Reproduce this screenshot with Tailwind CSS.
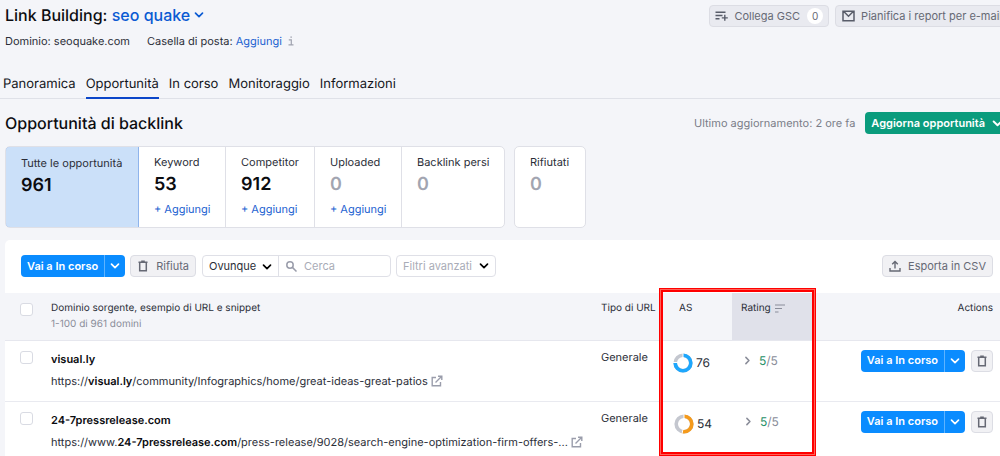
<!DOCTYPE html>
<html lang="it">
<head>
<meta charset="utf-8">
<meta name="viewport" content="width=device-width, initial-scale=1">
<title>Link Building: seo quake</title>
<script src="https://cdn.jsdelivr.net/npm/@tailwindcss/browser@4"></script>
</head>
<body class="min-h-screen overflow-hidden bg-[#f4f5f9] font-['Inter','Liberation_Sans',sans-serif] text-[11px] text-[#2b2e38] [text-rendering:geometricPrecision]">

<svg class="hidden" aria-hidden="true">
  <symbol id="chevron" viewBox="0 0 10 10"><path d="M1.500 3.200 5 6.600l3.500-3.400" fill="none" stroke="currentColor" stroke-width="1.700" stroke-linecap="round" stroke-linejoin="round"/></symbol>
  <symbol id="trash" viewBox="0 0 12 12"><path d="M1.500 2.200h9M4.200 1.200h3.600M2.700 2.500v8.300h6.600V2.500" fill="none" stroke="currentColor" stroke-width="1.500"/></symbol>
  <symbol id="external" viewBox="0 0 12 12"><path d="M5 2.500H1.200v8.300h8.300V7M7 1.200h3.800V5M10.500 1.500 4.500 7.500" fill="none" stroke="currentColor" stroke-width="1.400"/></symbol>
</svg>

<header class="flex justify-between pt-[5px] pl-[5px]">
  <div>
    <h1 class="flex items-center text-base leading-5 font-medium text-[#0b0c10]">Link Building:&nbsp;<button type="button" class="flex items-center gap-1 font-medium text-[#0b5bd3]">seo quake <svg class="size-[10px]"><use href="#chevron"/></svg></button></h1>
    <p class="mt-2 flex items-center leading-4">
      <span>Dominio: seoquake.com</span>
      <span class="ml-[17px]">Casella di posta: <a href="#" class="text-[#1d63d1]">Aggiungi</a></span>
      <svg class="ml-[6px] h-[10px] w-[6px] text-[#a0a3b0]" viewBox="0 0 6 10" fill="none" stroke="currentColor" stroke-width="1.200"><path d="M.8 3.900h2.500v4.700M.5 8.900h5M2.400 1.200h1.500"/></svg>
    </p>
  </div>
  <div class="-mr-[9px] flex shrink-0 gap-[6px] text-[#666974]">
    <button type="button" class="flex h-[22px] items-center rounded-[4px] border border-[#dcdde4] bg-[#e9eaf0] px-[5px]">
      <svg class="mr-[6px] h-3 w-[13px] text-[#585c69]" viewBox="0 0 13 12" fill="none" stroke="currentColor" stroke-width="1.400"><path d="M.5 2.200h10M.5 5.500h7M.5 8.800h4M9.800 4.700v6M6.800 7.900h6"/></svg>
      Collega GSC
      <span class="ml-[7px] flex size-4 items-center justify-center rounded-full bg-white text-[10px]">0</span>
    </button>
    <button type="button" class="flex h-[22px] items-center rounded-[4px] border border-[#dcdde4] bg-[#e9eaf0] px-[6px]">
      <svg class="mr-[6px] h-3 w-[13px] text-[#585c69]" viewBox="0 0 13 12" fill="none" stroke="currentColor" stroke-width="1.500"><path d="M1 1.200h11v9.600H1zM2 1.800l4.500 4.400L11 1.800"/></svg>
      Pianifica i report per e-mail
    </button>
  </div>
</header>

<nav class="mt-[23px] flex gap-[10px] border-b border-[#dfe1e8] pl-[3px] text-[13px] leading-6 text-[#14161c]">
  <a href="#" class="pb-[2px]">Panoramica</a>
  <a href="#" aria-current="page" class="-mb-px border-b-2 border-[#0b46c9] pb-px">Opportunità</a>
  <a href="#">In corso</a>
  <a href="#">Monitoraggio</a>
  <a href="#">Informazioni</a>
</nav>

<main class="pl-[5px]">
  <div class="mt-[13px] flex items-center justify-between">
    <h2 class="text-base leading-[22px] font-medium text-[#0b0c10]">Opportunità di backlink</h2>
    <div class="-mr-[9px] flex items-center gap-[10px]">
      <span class="text-[#7a7d88]">Ultimo aggiornamento: 2 ore fa</span>
      <button type="button" class="flex h-[22px] items-center rounded-[4px] bg-[#0a9c7d] px-[6px] font-semibold text-white">Aggiorna opportunità <svg class="ml-[7px] size-[11px]"><use href="#chevron"/></svg></button>
    </div>
  </div>

  <section class="mt-3 flex gap-[9px] text-[11px]">
    <div class="flex h-[82px] overflow-hidden rounded-[5px] border border-[#dfe0e7] bg-white">
      <div class="-m-px w-[134px] rounded-l-[5px] border border-[#8fb4ec] bg-[#cbe0f9] px-[15px] pt-2">
        <div class="leading-4 whitespace-nowrap">Tutte le opportunità</div><div class="mt-[3px] text-lg leading-6 font-semibold text-[#0b0c10]">961</div>
      </div>
      <div class="ml-px w-[87px] border-r border-[#dfe0e7] pt-[7px] pl-[15px]">
        <div class="leading-4">Keyword</div><div class="mt-[3px] text-lg leading-6 font-semibold text-[#0b0c10]">53</div><a href="#" class="mt-1 block leading-4 text-[#1d63d1]">+ Aggiungi</a>
      </div>
      <div class="w-[89px] border-r border-[#dfe0e7] pt-[7px] pl-[15px]">
        <div class="leading-4">Competitor</div><div class="mt-[3px] text-lg leading-6 font-semibold text-[#0b0c10]">912</div><a href="#" class="mt-1 block leading-4 text-[#1d63d1]">+ Aggiungi</a>
      </div>
      <div class="w-[87px] border-r border-[#dfe0e7] pt-[7px] pl-[15px]">
        <div class="leading-4">Uploaded</div><div class="mt-[3px] text-lg leading-6 font-semibold text-[#a2a5b1]">0</div><a href="#" class="mt-1 block leading-4 text-[#1d63d1]">+ Aggiungi</a>
      </div>
      <div class="w-[102px] pt-[7px] pl-[15px]">
        <div class="leading-4">Backlink persi</div><div class="mt-[3px] text-lg leading-6 font-semibold text-[#a2a5b1]">0</div>
      </div>
    </div>
    <div class="h-[82px] w-[72px] rounded-[5px] border border-[#dfe0e7] bg-white pt-[7px] pl-[15px]">
      <div class="leading-4">Rifiutati</div><div class="mt-[3px] text-lg leading-6 font-semibold text-[#a2a5b1]">0</div>
    </div>
  </section>

  <section class="relative mt-3 rounded-tl-[5px] bg-white pt-[15px]">
    <div class="flex pr-[7px] pb-4 pl-4">
      <div class="flex h-[22px] rounded-[4px] bg-[#0a8cff] font-semibold text-white">
        <button type="button" class="px-[6px]">Vai a In corso</button>
        <button type="button" aria-label="Altre azioni" class="flex w-[21px] items-center justify-center border-l border-[#5eb3ff]"><svg class="size-[10px]"><use href="#chevron"/></svg></button>
      </div>
      <button type="button" class="ml-[5px] flex h-[22px] items-center gap-[7px] rounded-[4px] border border-[#dcdde4] bg-[#f1f1f4] px-[6px] text-[#666974]"><svg class="size-3"><use href="#trash"/></svg>Rifiuta</button>
      <div class="ml-[6px] flex h-[22px] w-[189px] rounded-[4px] border border-[#dfe0e7]">
        <div class="relative w-[76px] border-r border-[#dfe0e7]">
          <select aria-label="Ambito di ricerca" class="h-5 w-full appearance-none pl-[6px]"><option>Ovunque</option></select>
          <svg class="pointer-events-none absolute top-[6px] right-[6px] size-[10px] text-black"><use href="#chevron"/></svg>
        </div>
        <label class="flex min-w-0 flex-1 items-center gap-[7px] pl-[7px]">
          <svg class="size-[11px] shrink-0 text-[#9a9dab]" viewBox="0 0 11 11" fill="none" stroke="currentColor" stroke-width="1.500"><circle cx="4" cy="4" r="3.200"/><path d="m6.400 6.400 4.100 4.100"/></svg>
          <input type="search" placeholder="Cerca" aria-label="Cerca" class="w-full min-w-0 outline-none placeholder:text-[#a9acb7]">
        </label>
      </div>
      <button type="button" class="ml-[5px] flex h-[22px] items-center gap-[7px] rounded-[4px] border border-[#dfe0e7] px-[6px] text-[#a9acb7]">Filtri avanzati <svg class="size-[10px] text-black"><use href="#chevron"/></svg></button>
      <button type="button" class="ml-auto flex h-[22px] items-center gap-[7px] rounded-[4px] border border-[#dcdde4] bg-[#f1f1f4] px-[6px] text-[#666974]"><svg class="size-3" viewBox="0 0 12 12" fill="none" stroke="currentColor" stroke-width="1.400"><path d="M1 8v3h10V8M6 8.500V1.500M3.200 4.200 6 1.400l2.800 2.800"/></svg>Esporta in CSV</button>
    </div>

    <table class="w-full table-fixed border-collapse text-left">
      <colgroup><col class="w-[46px]"><col><col class="w-[58px]"><col class="w-[73px]"><col class="w-[81px]"><col class="w-[187px]"></colgroup>
      <thead class="bg-[#f4f5f9] align-top text-[10px]">
        <tr class="h-[47px] border-b border-[#e6e7ee]">
          <th class="pt-[10px] pl-[15px]"><input type="checkbox" aria-label="Seleziona tutto" class="block size-[13px] appearance-none rounded-[3px] border border-[#d9dbe3] bg-white"></th>
          <th class="pt-[7px] font-normal"><div class="leading-4">Dominio sorgente, esempio di URL e snippet</div><div class="leading-4 text-[#8a8d99]">1-100 di 961 domini</div></th>
          <th class="pt-[7px] leading-4 font-normal whitespace-nowrap">Tipo di URL</th>
          <th class="pt-[7px] pl-5 leading-4 font-normal">AS</th>
          <th class="bg-[#e0e1ea] pt-[7px] pl-[9px] leading-4 font-normal"><span class="flex items-center gap-1">Rating <svg class="h-[9px] w-[10px] text-[#8a8d99]" viewBox="0 0 10 9" fill="none" stroke="currentColor" stroke-width="1.200"><path d="M0 1h10M0 4.500h7M0 8h3.500"/></svg></span></th>
          <th class="pt-[7px] pr-[7px] text-right leading-4 font-normal">Actions</th>
        </tr>
      </thead>
      <tbody class="align-top">
        <tr class="h-[61px] border-b border-[#e9eaf0]">
          <td class="pt-[10px] pl-[15px]"><input type="checkbox" aria-label="Seleziona visual.ly" class="block size-[13px] appearance-none rounded-[3px] border border-[#d9dbe3] bg-white"></td>
          <td class="pt-[10px] whitespace-nowrap"><div class="leading-4 font-semibold text-[#0b0c10]">visual.ly</div><div class="mt-[6px] flex items-center gap-[3px] leading-4"><span>https://<b class="font-semibold text-[#0b0c10]">visual.ly</b>/community/Infographics/home/great-ideas-great-patios</span><a href="#" aria-label="Apri visual.ly"><svg class="size-3 text-[#9a9dab]"><use href="#external"/></svg></a></div></td>
          <td class="pt-2 leading-4">Generale</td>
          <td class="pt-3 pl-[14px]"><div class="flex items-center gap-[3px]"><svg class="size-5" viewBox="0 0 20 20" fill="none" stroke-width="3.600"><circle cx="10" cy="10" r="7.800" stroke="#c4c7cf"/><circle cx="10" cy="10" r="7.800" stroke="#1ea7fd" pathLength="100" stroke-dasharray="76 24" transform="rotate(-90 10 10)"/><path d="M10 0v5M0 9.500h5" stroke="#fff" stroke-width="1"/></svg><span class="text-xs">76</span></div></td>
          <td class="pt-3 pl-[11px] text-[#8a8d99]"><div class="flex items-center gap-[7px] leading-4"><svg class="size-[9px] -rotate-90"><use href="#chevron"/></svg><span class="text-xs leading-4"><span class="text-[#1f9068]">5</span>/5</span></div></td>
          <td class="pt-[9px] pr-[7px]"><div class="flex justify-end gap-[6px]">
            <div class="flex h-[22px] rounded-[4px] bg-[#0a8cff] font-semibold text-white"><button type="button" class="px-[6px]">Vai a In corso</button><button type="button" aria-label="Altre azioni" class="flex w-[21px] items-center justify-center border-l border-[#5eb3ff]"><svg class="size-[10px]"><use href="#chevron"/></svg></button></div>
            <button type="button" aria-label="Rifiuta" class="flex size-[22px] items-center justify-center rounded-[4px] border border-[#dcdde4] bg-[#f1f1f4] text-[#666974]"><svg class="size-3"><use href="#trash"/></svg></button>
          </div></td>
        </tr>
        <tr class="h-[61px] border-b border-[#e9eaf0]">
          <td class="pt-[10px] pl-[15px]"><input type="checkbox" aria-label="Seleziona 24-7pressrelease.com" class="block size-[13px] appearance-none rounded-[3px] border border-[#d9dbe3] bg-white"></td>
          <td class="pt-[10px] whitespace-nowrap"><div class="leading-4 font-semibold text-[#0b0c10]">24-7pressrelease.com</div><div class="mt-[6px] flex items-center gap-[3px] leading-4"><span>https://www.<b class="font-semibold text-[#0b0c10]">24-7pressrelease.com</b>/press-release/9028/search-engine-optimization-firm-offers-...</span><a href="#" aria-label="Apri 24-7pressrelease.com"><svg class="size-3 text-[#9a9dab]"><use href="#external"/></svg></a></div></td>
          <td class="pt-2 leading-4">Generale</td>
          <td class="pt-3 pl-[15px]"><div class="flex items-center gap-[3px]"><svg class="size-5" viewBox="0 0 20 20" fill="none" stroke-width="3.600"><circle cx="10" cy="10" r="7.800" stroke="#c4c7cf"/><circle cx="10" cy="10" r="7.800" stroke="#f59a1b" pathLength="100" stroke-dasharray="54 46" transform="rotate(-90 10 10)"/><path d="M10 0v5M9 15l-1 5" stroke="#fff" stroke-width="1"/></svg><span class="text-xs">54</span></div></td>
          <td class="pt-3 pl-[12px] text-[#8a8d99]"><div class="flex items-center gap-[7px] leading-4"><svg class="size-[9px] -rotate-90"><use href="#chevron"/></svg><span class="text-xs leading-4"><span class="text-[#1f9068]">5</span>/5</span></div></td>
          <td class="pt-[9px] pr-[7px]"><div class="flex justify-end gap-[6px]">
            <div class="flex h-[22px] rounded-[4px] bg-[#0a8cff] font-semibold text-white"><button type="button" class="px-[6px]">Vai a In corso</button><button type="button" aria-label="Altre azioni" class="flex w-[21px] items-center justify-center border-l border-[#5eb3ff]"><svg class="size-[10px]"><use href="#chevron"/></svg></button></div>
            <button type="button" aria-label="Rifiuta" class="flex size-[22px] items-center justify-center rounded-[4px] border border-[#dcdde4] bg-[#f1f1f4] text-[#666974]"><svg class="size-3"><use href="#trash"/></svg></button>
          </div></td>
        </tr>
      </tbody>
    </table>
    <!-- Highlight around the AS and Rating columns -->
    <div class="pointer-events-none absolute top-12 right-[184px] h-[168px] w-[157px] border-4 border-[#ff0000] outline-1 -outline-offset-2 outline-[#ff6257]"></div>
  </section>
</main>
</body>
</html>
